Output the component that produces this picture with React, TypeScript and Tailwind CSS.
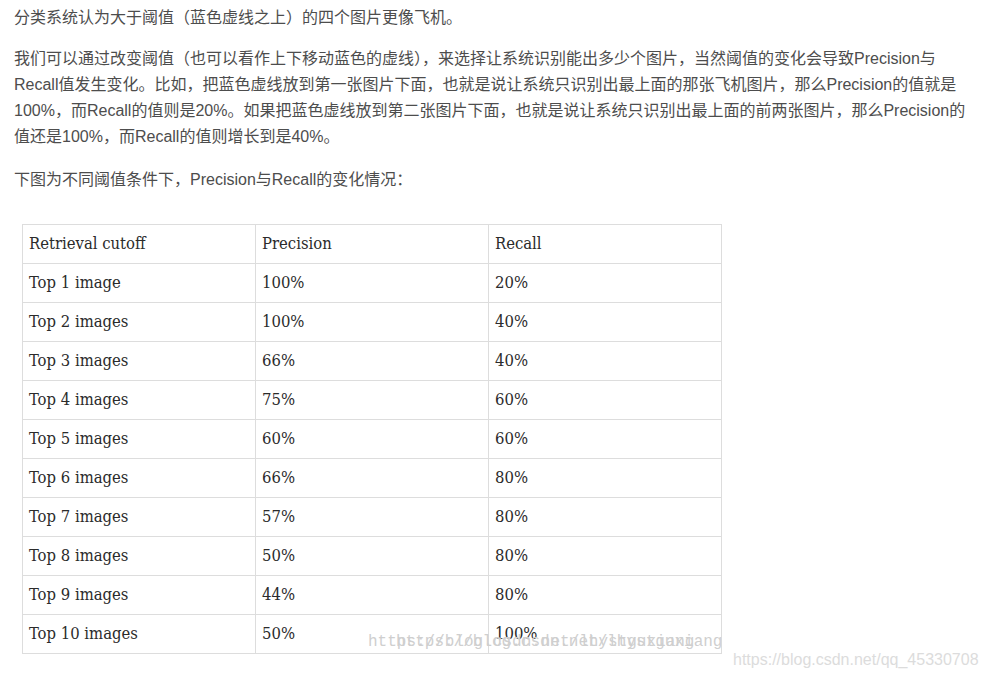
import React from 'react';

const rows: [string, string, string][] = [
  ['Top 1 image', '100%', '20%'],
  ['Top 2 images', '100%', '40%'],
  ['Top 3 images', '66%', '40%'],
  ['Top 4 images', '75%', '60%'],
  ['Top 5 images', '60%', '60%'],
  ['Top 6 images', '66%', '80%'],
  ['Top 7 images', '57%', '80%'],
  ['Top 8 images', '50%', '80%'],
  ['Top 9 images', '44%', '80%'],
  ['Top 10 images', '50%', '100%'],
];

const cell = 'border border-[#dddddd] h-[39px] pl-[6px] pr-[6px] text-left align-middle font-normal';

export default function App() {
  return (
    <div className="relative w-[986px] h-[677px] bg-white overflow-hidden">
      <div className="pl-[14px] w-[966px] text-[16px] leading-[26px] text-[#4d4d4d] font-['Liberation_Sans','Noto_Sans_CJK_SC',sans-serif]">
        <p className="mt-[5px]">分类系统认为大于阈值（蓝色虚线之上）的四个图片更像飞机。</p>
        <p className="mt-[15px]">
          我们可以通过改变阈值（也可以看作上下移动蓝色的虚线），来选择让系统识别能出多少个图片，当然阈值的变化会导致Precision与Recall值发生变化。比如，把蓝色虚线放到第一张图片下面，也就是说让系统只识别出最上面的那张飞机图片，那么Precision的值就是100%，而Recall的值则是20%。如果把蓝色虚线放到第二张图片下面，也就是说让系统只识别出最上面的前两张图片，那么Precision的值还是100%，而Recall的值则增长到是40%。
        </p>
        <p className="mt-[17px]">下图为不同阈值条件下，Precision与Recall的变化情况：</p>
      </div>

      <table className="ml-[22px] mt-[31px] border-collapse w-[700px] table-fixed text-[16.5px] text-[#2b2b2b] font-['DejaVu_Serif_Condensed','DejaVu_Serif',serif] [font-stretch:condensed]">
        <thead>
          <tr>
            <th className={cell}>Retrieval cutoff</th>
            <th className={cell}>Precision</th>
            <th className={cell}>Recall</th>
          </tr>
        </thead>
        <tbody>
          {rows.map((r, i) => (
            <tr key={i}>
              <td className={cell}>{r[0]}</td>
              <td className={cell}>{r[1]}</td>
              <td className={cell}>{r[2]}</td>
            </tr>
          ))}
        </tbody>
      </table>

      {/* image watermarks */}
      <span className="absolute left-[368px] top-[630px] whitespace-nowrap text-[16px] text-[#cfcfcf] font-['Liberation_Mono',monospace]">
        https://blog.csdn.net/lhystguxiang
      </span>
      <span className="absolute left-[396px] top-[630px] whitespace-nowrap text-[16px] text-[#cfcfcf] font-['Liberation_Mono',monospace]">
        https://blog.csdn.net/lhystguxiang
      </span>
      <span className="absolute left-[733px] top-[648px] whitespace-nowrap text-[16px] text-[#dcdcdc] font-['Liberation_Sans',sans-serif]">
        https://blog.csdn.net/qq_45330708
      </span>
    </div>
  );
}
